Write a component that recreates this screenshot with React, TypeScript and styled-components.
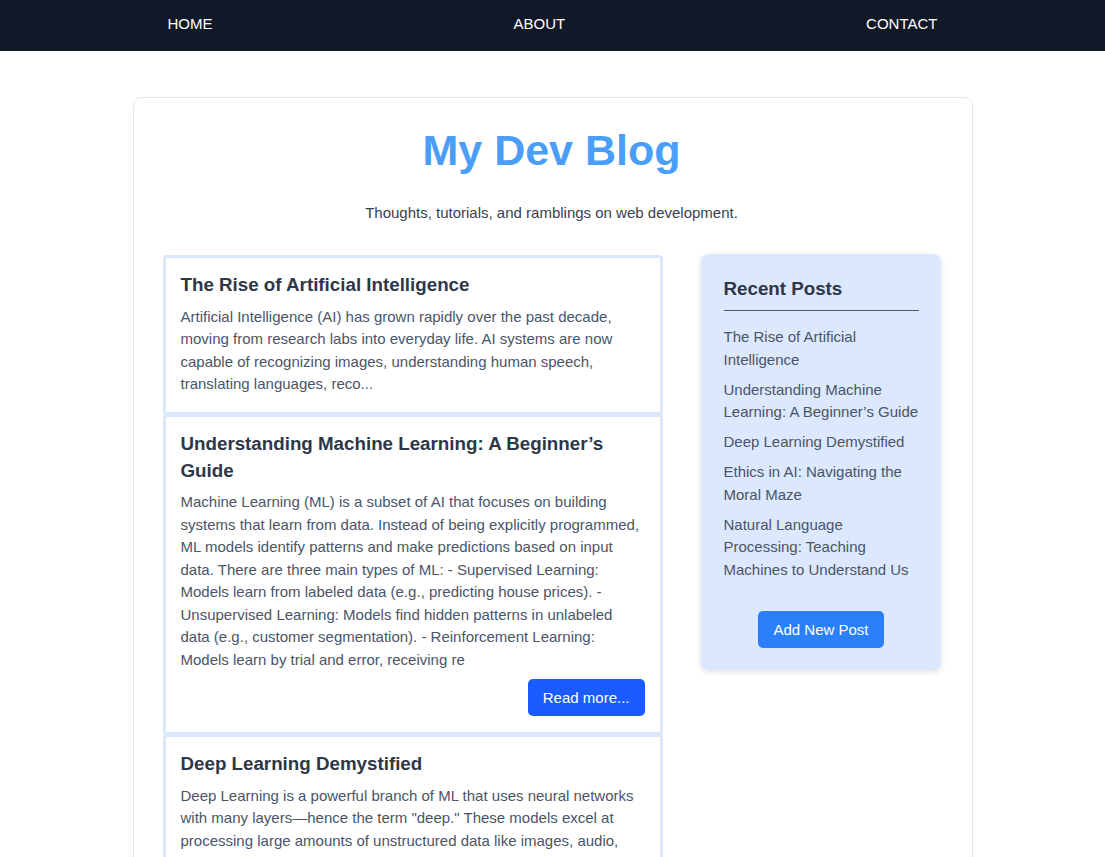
import React from "react";
import styled, { createGlobalStyle } from "styled-components";

const posts = [
  {
    title: "The Rise of Artificial Intelligence",
    excerpt:
      "Artificial Intelligence (AI) has grown rapidly over the past decade, moving from research labs into everyday life. AI systems are now capable of recognizing images, understanding human speech, translating languages, reco...",
    more: false,
  },
  {
    title: "Understanding Machine Learning: A Beginner\u2019s Guide",
    excerpt:
      "Machine Learning (ML) is a subset of AI that focuses on building systems that learn from data. Instead of being explicitly programmed, ML models identify patterns and make predictions based on input data. There are three main types of ML: - Supervised Learning: Models learn from labeled data (e.g., predicting house prices). - Unsupervised Learning: Models find hidden patterns in unlabeled data (e.g., customer segmentation). - Reinforcement Learning: Models learn by trial and error, receiving re",
    more: true,
  },
  {
    title: "Deep Learning Demystified",
    excerpt:
      'Deep Learning is a powerful branch of ML that uses neural networks with many layers\u2014hence the term "deep." These models excel at processing large amounts of unstructured data like images, audio, and text, powering things like voice assistants and self-driving cars...',
    more: false,
  },
];

const recent = [
  "The Rise of Artificial Intelligence",
  "Understanding Machine Learning: A Beginner\u2019s Guide",
  "Deep Learning Demystified",
  "Ethics in AI: Navigating the Moral Maze",
  "Natural Language Processing: Teaching Machines to Understand Us",
];

const GlobalStyle = createGlobalStyle`
  body {
    margin: 0;
    background: #fff;
    font-family: "Liberation Sans", Arial, sans-serif;
    font-size: 15px;
    color: #4a5568;
  }
`;

const Nav = styled.nav`
  background: #111827;
  height: 51px;
  box-sizing: border-box;
  padding-bottom: 4px;
  display: flex;
  justify-content: center;
`;

const NavInner = styled.div`
  width: 770px;
  display: flex;
  justify-content: space-between;
  align-items: center;
`;

const NavLink = styled.a`
  color: #fff;
  text-decoration: none;
  font-size: 15px;
  text-transform: uppercase;
`;

const Container = styled.main`
  max-width: 840px;
  box-sizing: border-box;
  margin: 46px auto 0;
  padding: 18px 31px 40px 29px;
  border: 1px solid #e3e8f2;
  border-radius: 8px;
  background: #fff;
`;

const Title = styled.h1`
  margin: 0;
  text-align: center;
  color: #4a9ef8;
  font-size: 43px;
  line-height: 68px;
  font-weight: 700;
`;

const Subtitle = styled.p`
  margin: 18px 0 31px;
  text-align: center;
  color: #374151;
  font-size: 15px;
  line-height: 22px;
`;

const Layout = styled.div`
  display: grid;
  grid-template-columns: 500px 240px;
  justify-content: space-between;
  align-items: start;
`;

const PostList = styled.section`
  display: flex;
  flex-direction: column;
`;

const PostCard = styled.article`
  border: 3px solid #dbe7fc;
  border-radius: 3px;
  padding: 13px 15px 16px;
  display: flex;
  flex-direction: column;

  & + & {
    margin-top: -1px;
  }
`;

const PostTitle = styled.h2`
  margin: 0 0 7.5px;
  font-size: 18.75px;
  line-height: 27px;
  color: #2d3748;
  font-weight: 700;
`;

const Excerpt = styled.p`
  margin: 0;
  font-size: 15px;
  line-height: 22.5px;
  color: #4a5568;
`;

const Button = styled.button<{ $tone: "dark" | "light" }>`
  border: none;
  border-radius: 5px;
  color: #fff;
  font-family: "Liberation Sans", Arial, sans-serif;
  font-size: 15px;
  padding: 0 15px;
  height: 37px;
  cursor: pointer;
  background: ${(p) => (p.$tone === "dark" ? "#1a5cff" : "#2b7ffa")};
`;

const ReadMore = styled(Button)`
  align-self: flex-end;
  margin-top: 8px;
`;

const Sidebar = styled.aside`
  background: #dbe8fd;
  border-radius: 8px;
  padding: 22px 22px 22px 23px;
  margin-top: -1px;
  box-shadow: 0 2px 6px rgba(0, 0, 0, 0.12);
  display: flex;
  flex-direction: column;
`;

const SideTitle = styled.h3`
  margin: 0 0 15px;
  padding-bottom: 8px;
  border-bottom: 1px solid #4b5563;
  font-size: 18.75px;
  line-height: 26px;
  color: #2d3748;
`;

const RecentList = styled.ul`
  list-style: none;
  margin: 0 0 30px;
  padding: 0;
  display: flex;
  flex-direction: column;
  gap: 7.5px;
`;

const RecentItem = styled.li`
  font-size: 15px;
  line-height: 22.5px;
  color: #4a5568;
`;

const AddButton = styled(Button)`
  align-self: center;
`;

export default function App() {
  return (
    <>
      <GlobalStyle />
      <Nav>
        <NavInner>
          <NavLink href="#">Home</NavLink>
          <NavLink href="#">About</NavLink>
          <NavLink href="#">Contact</NavLink>
        </NavInner>
      </Nav>
      <Container>
        <Title>My Dev Blog</Title>
        <Subtitle>Thoughts, tutorials, and ramblings on web development.</Subtitle>
        <Layout>
          <PostList>
            {posts.map((p) => (
              <PostCard key={p.title}>
                <PostTitle>{p.title}</PostTitle>
                <Excerpt>{p.excerpt}</Excerpt>
                {p.more && <ReadMore $tone="dark">Read more...</ReadMore>}
              </PostCard>
            ))}
          </PostList>
          <Sidebar>
            <SideTitle>Recent Posts</SideTitle>
            <RecentList>
              {recent.map((r) => (
                <RecentItem key={r}>{r}</RecentItem>
              ))}
            </RecentList>
            <AddButton $tone="light">Add New Post</AddButton>
          </Sidebar>
        </Layout>
      </Container>
    </>
  );
}
